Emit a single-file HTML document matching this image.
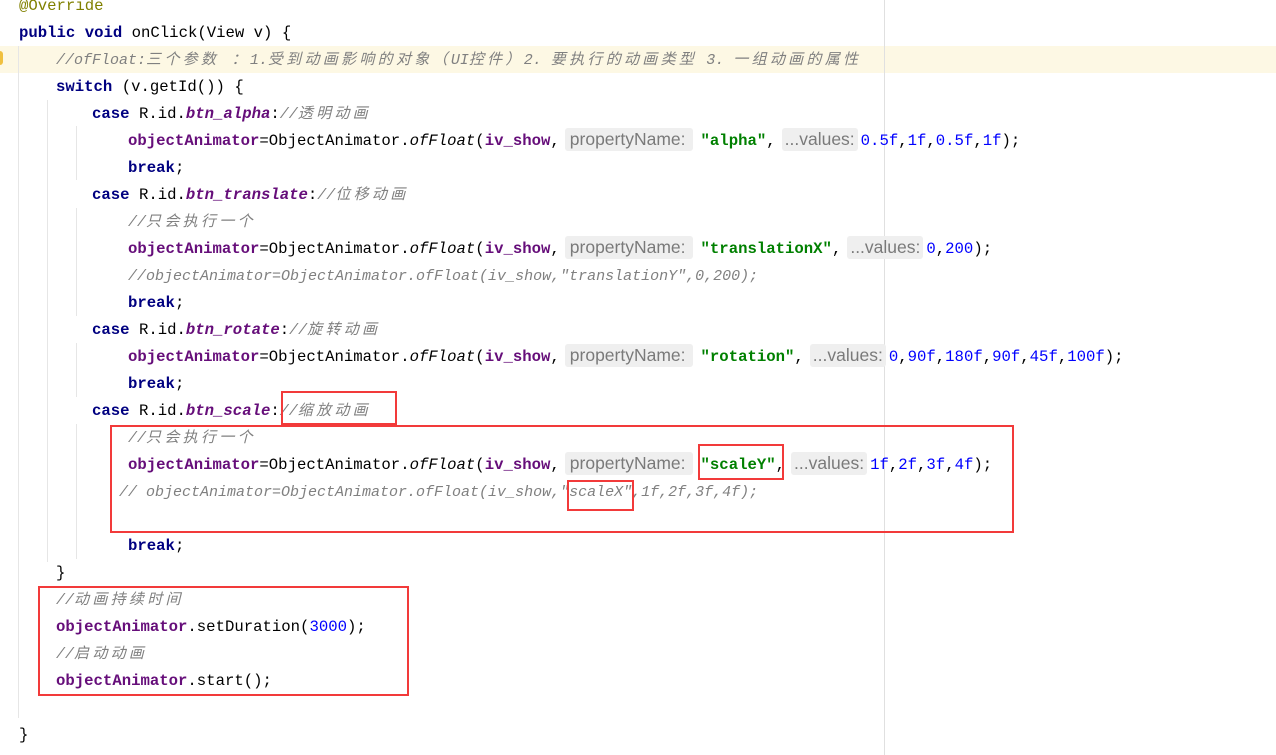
<!DOCTYPE html>
<html><head><meta charset="utf-8"><style>
body{margin:0;width:1276px;height:755px;background:#fff;position:relative;overflow:hidden;font-family:"Liberation Mono","Noto Sans CJK SC",monospace;font-size:15.65px;color:#000}
.l{position:absolute;height:27px;line-height:27px;white-space:pre}
.k{color:#000080;font-weight:bold}
.f{color:#660e7a;font-weight:bold}
.fi{color:#660e7a;font-weight:bold;font-style:italic}
.m{font-style:italic}
.n{color:#0000ff}
.s{color:#008000;font-weight:bold}
.c{color:#808080;font-style:italic;font-size:15px}
.z{letter-spacing:3.3px}
.a{color:#808000}
.h{display:inline-block;font-family:"Liberation Sans",sans-serif;font-size:17.5px;color:#7a7a7a;background:#efefef;border-radius:3px;padding:0 7px 0 5px;line-height:23px;margin:0 8px 0 5px}
.v{padding:0 3px;margin:0 3px 0 6px}
.g{position:absolute;width:1px;background:#e6e6e6}
.r{position:absolute;border:2.5px solid #f23a3a;box-sizing:border-box}
</style></head><body>
<div style="position:absolute;left:0;top:46px;width:1276px;height:27px;background:#fdf8e4"></div>
<div style="position:absolute;left:0;top:51px;width:3px;height:14px;background:#f0c040;border-radius:0 3px 3px 0"></div>
<div class="g" style="left:884px;top:0;height:755px;background:#e0e0e0"></div>
<div class="g" style="left:18px;top:46px;height:672px"></div>
<div class="g" style="left:47px;top:100px;height:462px"></div>
<div class="g" style="left:76px;top:126px;height:54px"></div>
<div class="g" style="left:76px;top:208px;height:108px"></div>
<div class="g" style="left:76px;top:343px;height:54px"></div>
<div class="g" style="left:76px;top:424px;height:135px"></div>

<div class="l a" style="left:19px;top:-7px">@Override</div>
<div class="l" style="left:19px;top:20px"><span class="k">public void </span>onClick(View v) {</div>
<div class="l c" style="left:56px;top:47px">//ofFloat:<span class="z">三个参数 ：</span>1.<span class="z">受到动画影响的对象（</span>UI<span class="z">控件）</span>2. <span class="z">要执行的动画类型</span> 3. <span class="z">一组动画的属性</span></div>
<div class="l" style="left:56px;top:74px"><span class="k">switch </span>(v.getId()) {</div>
<div class="l" style="left:92px;top:101px"><span class="k">case </span>R.id.<span class="fi">btn_alpha</span>:<span class="c">//<span class="z">透明动画</span></span></div>
<div class="l" style="left:128px;top:128px"><span class="f">objectAnimator</span>=ObjectAnimator.<span class="m">ofFloat</span>(<span class="f">iv_show</span>,<span class="h">propertyName:</span><span class="s">"alpha"</span>,<span class="h v">...values:</span><span class="n">0.5f</span>,<span class="n">1f</span>,<span class="n">0.5f</span>,<span class="n">1f</span>);</div>
<div class="l k" style="left:128px;top:155px">break<span style="font-weight:normal;color:#000">;</span></div>
<div class="l" style="left:92px;top:182px"><span class="k">case </span>R.id.<span class="fi">btn_translate</span>:<span class="c">//<span class="z">位移动画</span></span></div>
<div class="l c" style="left:128px;top:209px">//<span class="z">只会执行一个</span></div>
<div class="l" style="left:128px;top:236px"><span class="f">objectAnimator</span>=ObjectAnimator.<span class="m">ofFloat</span>(<span class="f">iv_show</span>,<span class="h">propertyName:</span><span class="s">"translationX"</span>,<span class="h v">...values:</span><span class="n">0</span>,<span class="n">200</span>);</div>
<div class="l c" style="left:128px;top:263px">//objectAnimator=ObjectAnimator.ofFloat(iv_show,"translationY",0,200);</div>
<div class="l k" style="left:128px;top:290px">break<span style="font-weight:normal;color:#000">;</span></div>
<div class="l" style="left:92px;top:317px"><span class="k">case </span>R.id.<span class="fi">btn_rotate</span>:<span class="c">//<span class="z">旋转动画</span></span></div>
<div class="l" style="left:128px;top:344px"><span class="f">objectAnimator</span>=ObjectAnimator.<span class="m">ofFloat</span>(<span class="f">iv_show</span>,<span class="h">propertyName:</span><span class="s">"rotation"</span>,<span class="h v">...values:</span><span class="n">0</span>,<span class="n">90f</span>,<span class="n">180f</span>,<span class="n">90f</span>,<span class="n">45f</span>,<span class="n">100f</span>);</div>
<div class="l k" style="left:128px;top:371px">break<span style="font-weight:normal;color:#000">;</span></div>
<div class="l" style="left:92px;top:398px"><span class="k">case </span>R.id.<span class="fi">btn_scale</span>:<span class="c">//<span class="z">缩放动画</span></span></div>
<div class="l c" style="left:128px;top:425px">//<span class="z">只会执行一个</span></div>
<div class="l" style="left:128px;top:452px"><span class="f">objectAnimator</span>=ObjectAnimator.<span class="m">ofFloat</span>(<span class="f">iv_show</span>,<span class="h">propertyName:</span><span class="s">"scaleY"</span>,<span class="h v">...values:</span><span class="n">1f</span>,<span class="n">2f</span>,<span class="n">3f</span>,<span class="n">4f</span>);</div>
<div class="l c" style="left:119px;top:479px">// objectAnimator=ObjectAnimator.ofFloat(iv_show,"scaleX",1f,2f,3f,4f);</div>
<div class="l k" style="left:128px;top:533px">break<span style="font-weight:normal;color:#000">;</span></div>
<div class="l" style="left:56px;top:560px">}</div>
<div class="l c" style="left:56px;top:587px">//<span class="z">动画持续时间</span></div>
<div class="l" style="left:56px;top:614px"><span class="f">objectAnimator</span>.setDuration(<span class="n">3000</span>);</div>
<div class="l c" style="left:56px;top:641px">//<span class="z">启动动画</span></div>
<div class="l" style="left:56px;top:668px"><span class="f">objectAnimator</span>.start();</div>
<div class="l" style="left:19px;top:722px">}</div>

<div class="r" style="left:281px;top:391px;width:116px;height:34px"></div>
<div class="r" style="left:110px;top:425px;width:904px;height:108px"></div>
<div class="r" style="left:698px;top:444px;width:86px;height:36px"></div>
<div class="r" style="left:567px;top:480px;width:67px;height:31px"></div>
<div class="r" style="left:38px;top:586px;width:371px;height:110px"></div>
</body></html>
